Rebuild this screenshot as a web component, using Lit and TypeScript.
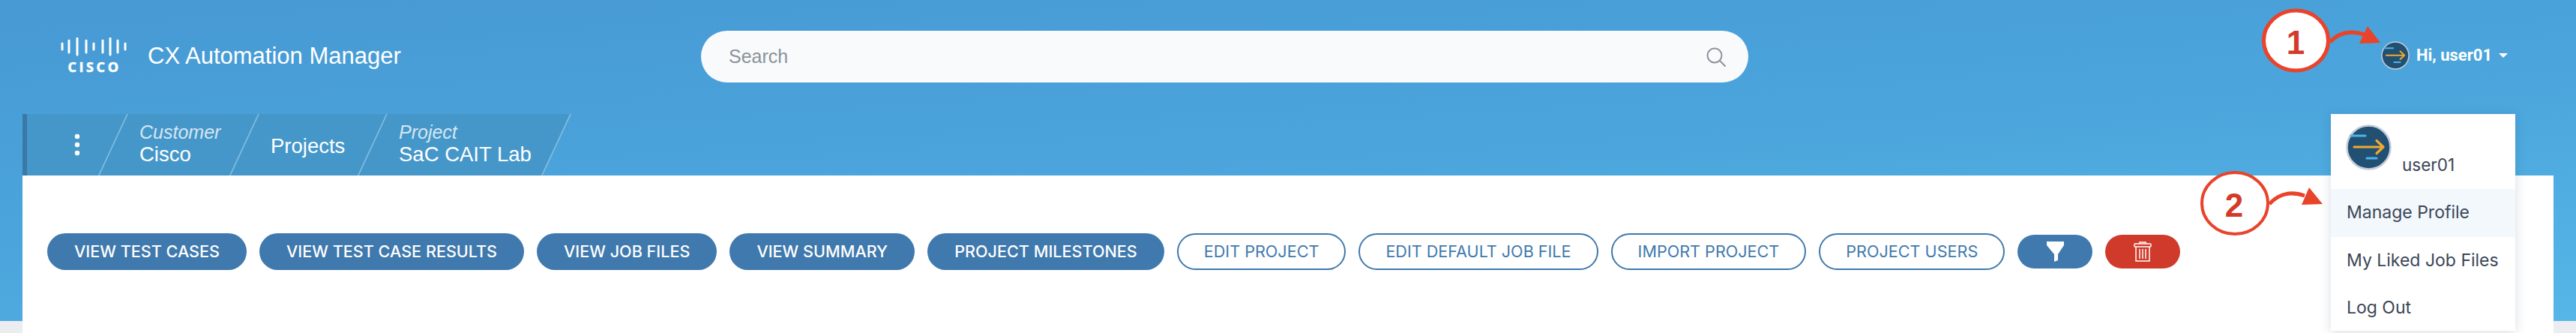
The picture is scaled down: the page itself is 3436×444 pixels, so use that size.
import { LitElement, html, css, svg } from "lit";
import { customElement } from "lit/decorators.js";

const avatar = (size: number) => html`<svg class="avatar" width=${size} height=${size} viewBox="0 0 61 61" fill="none" stroke-linecap="round" stroke-linejoin="round">
  <circle cx="30.5" cy="30.5" r="29" fill="#215073" stroke="#c5cdd8" stroke-width="2.5"/>
  <path d="M7 15H26" stroke="#4db4ea" stroke-width="3.2"/>
  <path d="M28 45H41" stroke="#4db4ea" stroke-width="3.2"/>
  <path d="M11 30H50M41 21.5L50 30L41 38.5" stroke="#f0a92e" stroke-width="3.2"/>
</svg>`;

const solid = ["VIEW TEST CASES", "VIEW TEST CASE RESULTS", "VIEW JOB FILES", "VIEW SUMMARY", "PROJECT MILESTONES"];
const outline = ["EDIT PROJECT", "EDIT DEFAULT JOB FILE", "IMPORT PROJECT", "PROJECT USERS"];
const bars = [[5,4],[14,8],[25,11],[37,8],[47,4],[59,8],[69,11],[79,8],[89,4]];

@customElement("app-root")
export class AppRoot extends LitElement {
  static styles = css`
    :host {
      display: block;
      position: relative;
      width: 3436px;
      height: 444px;
      overflow: hidden;
      font-family: "Liberation Sans", Arial, sans-serif;
      background-color: #ebedf1;
      background-image: linear-gradient(176deg, #4799d3 0%, #4ba5dc 50%, #55b6e7 100%);
      background-size: 100% 428px;
      background-repeat: no-repeat;
    }
    .top { height: 152px; display: flex; align-items: flex-start; position: relative; }
    .logo { margin: 50px 0 0 78px; width: 94px; height: 50px; display: block; flex: none; }
    .title { margin: 58px 0 0 25px; font-size: 31px; line-height: 34px; color: #fff; width: 738px; flex: none; white-space: nowrap; }
    .search {
      margin-top: 41px; width: 1397px; height: 69px; border-radius: 35px; background: #f8fafc;
      display: flex; align-items: center; justify-content: space-between; padding: 0 30px 0 37px; box-sizing: border-box; flex: none;
    }
    .search span { font-size: 25px; color: #8b9299; }
    .user { margin: 55px 0 0 844px; display: flex; align-items: center; flex: none; color: #fff; font: 700 22px/38px Roboto, sans-serif; white-space: nowrap; }
    .user .avatar { margin-right: 9px; }
    .caret { width: 0; height: 0; border-left: 6px solid transparent; border-right: 6px solid transparent; border-top: 6px solid #fff; margin-left: 9px; }
    .crumbs { margin-left: 30px; height: 82px; display: flex; overflow: hidden; border-left: 6px solid #3a78a6; width: 760px; color: #fff; }
    .crumb { position: relative; height: 82px; box-sizing: border-box; padding-left: 34px; display: flex; flex-direction: column; justify-content: center; flex: none; white-space: nowrap; font-size: 27.5px; line-height: 31px; }
    .crumb::before { content: ""; position: absolute; inset: 0; background: #4697c9; border-right: 2px solid #7fbcdf; transform: skewX(-25deg); z-index: 0; }
    .crumb > * { position: relative; z-index: 1; }
    .crumb em { font-size: 25px; line-height: 28px; color: #d4e6f2; }
    .c0 { width: 116px; padding-left: 63px; }
    .c0::before { left: -60px; }
    .c1 { width: 175px; padding-bottom: 3px; }
    .c2 { width: 171px; padding-top: 3px; }
    .c3 { width: 245px; padding-bottom: 3px; }
    .card { margin: 0 30px; height: 210px; background: #fff; display: flex; gap: 17px; padding: 77px 0 0 33px; box-sizing: border-box; align-items: flex-start; }
    .btn { height: 49px; border-radius: 25px; box-sizing: border-box; padding: 0 36px; display: flex; align-items: center; font: 500 21.6px/1 Inter, sans-serif; white-space: nowrap; flex: none; background: #3f79ad; color: #fff; }
    .btn.o { background: #fff; color: #3f79ad; border: 2px solid #3f79ad; font-weight: 400; padding: 0 34px; }
    .ico { width: 100px; height: 45px; margin-top: 2px; padding: 0; justify-content: center; }
    .ico.red { background: #d03a2a; }
    .menu { position: absolute; left: 3109px; top: 152px; width: 246px; height: 289px; background: #fff; box-shadow: 0 2px 14px rgba(40, 60, 90, .18); color: #3b4656; font: 400 23px/1 Inter, sans-serif; z-index: 2; }
    .head { height: 100px; display: flex; align-items: flex-start; padding: 14px 0 0 20px; box-sizing: border-box; }
    .head span { margin: 43px 0 0 14px; font-size: 22.5px; }
    .item { height: 63.5px; display: flex; align-items: center; padding-left: 21px; white-space: nowrap; }
    .item.on { background: #f3f8fc; }
    .notes { position: absolute; inset: 0; z-index: 3; pointer-events: none; }
    .notes text { font: 700 44px "Liberation Sans", sans-serif; fill: #d33a2a; text-anchor: middle; }
  `;

  render() {
    return html`
      <div class="top">
        <svg class="logo" viewBox="0 0 94 50" fill="none">
          <g stroke="#fff" stroke-width="3" stroke-linecap="round">
            ${bars.map(([x, h]) => svg`<path d="M${x} ${12 - h}V${12 + h}"/>`)}
          </g>
          <text x="48" y="46" text-anchor="middle" fill="#fff" stroke="#fff" stroke-width=".6" font-family="Open Sans, sans-serif" font-weight="700" font-size="18" letter-spacing="3.6">CISCO</text>
        </svg>
        <div class="title">CX Automation Manager</div>
        <div class="search">
          <span>Search</span>
          <svg width="26" height="26" viewBox="0 0 26 26" fill="none" stroke="#8b9299" stroke-width="2" stroke-linecap="round"><circle cx="11" cy="11" r="9.5"/><path d="M18 18L25 25"/></svg>
        </div>
        <div class="user">${avatar(38)}Hi, user01<i class="caret"></i></div>
      </div>

      <div class="crumbs">
        <div class="crumb c0"><svg width="8" height="30" viewBox="0 0 8 30" fill="#fff"><circle cx="4" cy="4" r="3.2"/><circle cx="4" cy="15" r="3.2"/><circle cx="4" cy="26" r="3.2"/></svg></div>
        <div class="crumb c1"><em>Customer</em><span>Cisco</span></div>
        <div class="crumb c2"><span>Projects</span></div>
        <div class="crumb c3"><em>Project</em><span>SaC CAIT Lab</span></div>
      </div>

      <div class="card">
        ${solid.map((t) => html`<div class="btn">${t}</div>`)}
        ${outline.map((t) => html`<div class="btn o">${t}</div>`)}
        <div class="btn ico"><svg width="23" height="27" viewBox="0 0 23 27" fill="#fff"><path d="M0 0H23V5L15 17V25L10 27V17L0 5Z"/></svg></div>
        <div class="btn ico red"><svg width="24" height="27" viewBox="0 0 24 27" fill="none" stroke="#fff" stroke-width="1.5"><path d="M8 3V1H16V3"/><rect x="1" y="3" width="22" height="4" rx="1"/><path d="M3 7V26H21V7"/><path d="M8 10V23M12 10V23M16 10V23"/></svg></div>
      </div>

      <div class="menu">
        <div class="head">${avatar(61)}<span>user01</span></div>
        <div class="item on">Manage Profile</div>
        <div class="item">My Liked Job Files</div>
        <div class="item">Log Out</div>
      </div>

      <svg class="notes" width="3436" height="444" viewBox="0 0 3436 444" fill="none">
        <ellipse cx="3062.5" cy="54" rx="43" ry="40" fill="#fff" stroke="#e9432a" stroke-width="5"/>
        <text x="3062" y="72">1</text>
        <path d="M3108 56C3120 43 3135 40 3154 46" stroke="#e9432a" stroke-width="5"/>
        <path d="M3158 35L3175 57L3147 58Z" fill="#e9432a"/>
        <ellipse cx="2981" cy="271" rx="44" ry="41" fill="#fff" stroke="#e9432a" stroke-width="4"/>
        <text x="2980" y="289">2</text>
        <path d="M3027 272C3039 259 3054 254 3074 261" stroke="#e9432a" stroke-width="5"/>
        <path d="M3080 250L3098 272L3070 273Z" fill="#e9432a"/>
      </svg>
    `;
  }
}
